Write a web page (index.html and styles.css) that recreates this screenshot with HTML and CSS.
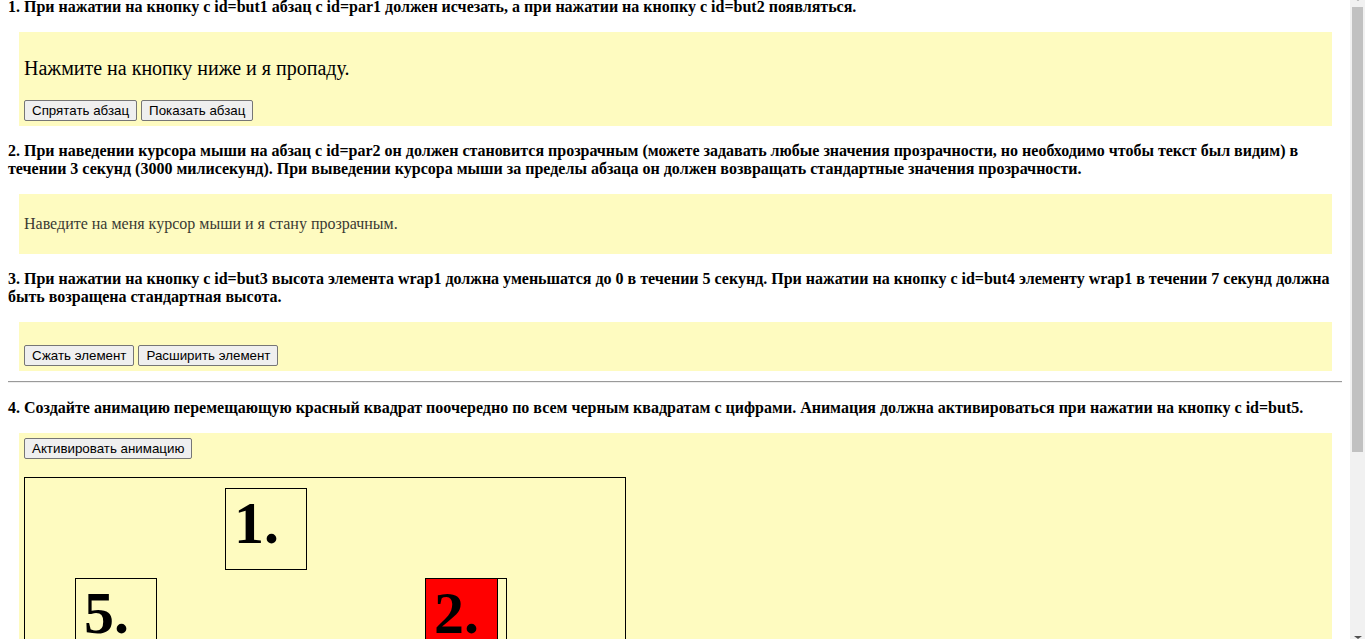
FILE: index.html
```html
<!DOCTYPE html>
<html lang="ru">
<head>
<meta charset="utf-8">
<title>Задания</title>
<link rel="stylesheet" href="styles.css">
</head>
<body>
<div class="page">
  <p class="task first">1. При нажатии на кнопку с id=but1 абзац с id=par1 должен исчезать, а при нажатии на кнопку с id=but2 появляться.</p>
  <div class="box box1">
    <p class="par1">Нажмите на кнопку ниже и я пропаду.</p>
    <button class="btn">Спрятать абзац</button>
    <button class="btn">Показать абзац</button>
  </div>

  <p class="task">2. При наведении курсора мыши на абзац с id=par2 он должен становится прозрачным (можете задавать любые значения прозрачности, но необходимо чтобы текст был видим) в течении 3 секунд (3000 милисекунд). При выведении курсора мыши за пределы абзаца он должен возвращать стандартные значения прозрачности.</p>
  <div class="box box2">
    <p class="par2">Наведите на меня курсор мыши и я стану прозрачным.</p>
  </div>

  <p class="task">3. При нажатии на кнопку с id=but3 высота элемента wrap1 должна уменьшатся до 0 в течении 5 секунд. При нажатии на кнопку с id=but4 элементу wrap1 в течении 7 секунд должна быть возращена стандартная высота.</p>
  <div class="box box3">
    <button class="btn">Сжать элемент</button>
    <button class="btn">Расширить элемент</button>
  </div>

  <hr class="rule">

  <p class="task task4">4. Создайте анимацию перемещающую красный квадрат поочередно по всем черным квадратам с цифрами. Анимация должна активироваться при нажатии на кнопку с id=but5.</p>
  <div class="box box4">
    <button class="btn">Активировать анимацию</button>
    <div class="field">
      <div class="mover"></div>
      <div class="sq sq1">1.</div>
      <div class="sq sq2">2.</div>
      <div class="sq sq5">5.</div>
    </div>
  </div>
</div>

<div class="scrollbar" aria-hidden="true">
  <div class="scroll-up"></div>
  <div class="scroll-thumb"></div>
  <div class="scroll-down"></div>
</div>
</body>
</html>
```

FILE: styles.css
```css
html, body {
  margin: 0;
  padding: 0;
}
html {
  overflow: hidden;
}
body {
  background: #ffffff;
  color: #000000;
  font-family: "Liberation Serif", "Times New Roman", serif;
  font-size: 16px;
}
.page {
  margin: -2px 23px 0 8px;
}
.task {
  font-weight: bold;
  font-size: 16px;
  margin: 16px 0;
}
.task.first {
  margin-top: 0;
}
.box {
  background: #fefbc0;
  margin: 0 10px 0 11px;
  padding: 5px;
}
.par1 {
  font-size: 20px;
  margin: 20px 0;
}
.par2 {
  margin: 16px 0;
  color: #3a3a33;
}
.box3 {
  padding-top: 23px;
}
.btn {
  font-family: "Liberation Sans", Arial, sans-serif;
  font-size: 13.333px;
  height: 21px;
  padding: 1px 7px;
  border: 1px solid #767676;
  border-radius: 2px;
  background: #efefef;
  color: #000000;
  vertical-align: top;
  margin: 0;
}
.rule {
  margin: 10px 0 0 0;
  border: 0;
  border-top: 1px solid #9a9a9a;
  border-bottom: 1px solid #eeeeee;
  height: 0;
}
.box4 {
  padding-bottom: 40px;
}
.field {
  position: relative;
  margin-top: 18px;
  width: 600px;
  height: 300px;
  border: 1px solid #000000;
}
.sq {
  position: absolute;
  width: 72px;
  height: 80px;
  padding-left: 8px;
  border: 1px solid #000000;
  font-weight: bold;
  font-size: 60px;
  font-family: "Liberation Serif", "Times New Roman", serif;
}
.sq1 { left: 200px; top: 10px; }
.sq2 { left: 400px; top: 100px; }
.sq5 { left: 50px; top: 100px; }
.mover {
  position: absolute;
  left: 400px;
  top: 100px;
  width: 71px;
  height: 71px;
  background: #ff0000;
  border: 1px solid #000000;
}

/* classic window scrollbar drawn over the right edge */
.scrollbar {
  position: fixed;
  top: 0;
  right: 0;
  width: 15px;
  height: 100%;
  background: #f1f1f1;
  display: flex;
  flex-direction: column;
  align-items: center;
}
.scroll-up {
  width: 0;
  height: 0;
  margin-top: -2px;
  border-left: 4px solid transparent;
  border-right: 4px solid transparent;
  border-top: 3px solid #a3a3a3;
}
.scroll-thumb {
  width: 11px;
  margin-top: 6px;
  height: 445px;
  background: #c1c1c1;
}
.scroll-down {
  width: 0;
  height: 0;
  margin-top: auto;
  margin-bottom: 0;
  border-left: 4px solid transparent;
  border-right: 4px solid transparent;
  border-top: 3px solid #505050;
}
```
